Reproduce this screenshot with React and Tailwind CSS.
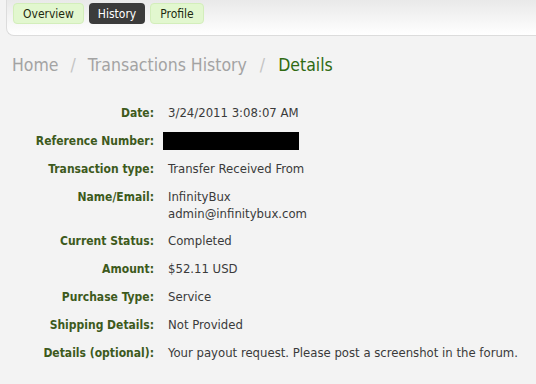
const rows = [
  { label: 'Date:', value: '3/24/2011 3:08:07 AM' },
  { label: 'Reference Number:', redacted: true },
  { label: 'Transaction type:', value: 'Transfer Received From' },
  { label: 'Name/Email:', value: ['InfinityBux', 'admin@infinitybux.com'] },
  { label: 'Current Status:', value: 'Completed' },
  { label: 'Amount:', value: '$52.11 USD' },
  { label: 'Purchase Type:', value: 'Service' },
  { label: 'Shipping Details:', value: 'Not Provided' },
  { label: 'Details (optional):', value: 'Your payout request. Please post a screenshot in the forum.' },
];

function Tab({ children, active }) {
  return (
    <div
      className={
        active
          ? 'h-[21px] px-[9px] flex items-center rounded-[4px] bg-[#3b3b3b] text-white'
          : 'h-[21px] px-[9px] flex items-center rounded-[4px] bg-[#e2f7cf] border border-[#d3eebb] text-[#1e2a10]'
      }
    >
      {children}
    </div>
  );
}

export default function App() {
  return (
    <div
      className="w-[536px] h-[384px] overflow-hidden bg-[#f3f3f3] text-[12px]"
      style={{ fontFamily: '"DejaVu Sans Condensed", Tahoma, "DejaVu Sans", sans-serif' }}
    >
      <div className="ml-[6px] h-[36px] pl-[6px] pt-[3px] rounded-bl-[8px] border-b border-l border-[#dcdcdc] bg-gradient-to-b from-[#e9e9e9] to-white flex gap-[5px] text-[12px]">
        <Tab>Overview</Tab>
        <Tab active>History</Tab>
        <Tab>Profile</Tab>
      </div>

      <div className="mt-[18px] ml-[12px] text-[17.5px] leading-[22px] flex items-center text-[#a3a3a3]">
        <span>Home</span>
        <span className="mx-[12px] text-[#c4c4c4]">/</span>
        <span>Transactions History</span>
        <span className="mx-[13px] text-[#c4c4c4]">/</span>
        <span className="text-[#2f6a12]">Details</span>
      </div>

      <div className="mt-[28px] flex flex-col gap-[10px]">
        {rows.map((r) => (
          <div key={r.label} className="flex items-start min-h-[18px]">
            <div className="w-[154px] shrink-0 text-right font-bold text-[#3d5a1c] leading-[18px]">{r.label}</div>
            <div className="pl-[14px] text-[13px] text-[#3a3a3a] leading-[18px]">
              {r.redacted ? (
                <div className="ml-[-5px] w-[136px] h-[18px] bg-black" />
              ) : Array.isArray(r.value) ? (
                r.value.map((v) => <div key={v} className="leading-[17px]">{v}</div>)
              ) : (
                r.value
              )}
            </div>
          </div>
        ))}
      </div>
    </div>
  );
}
